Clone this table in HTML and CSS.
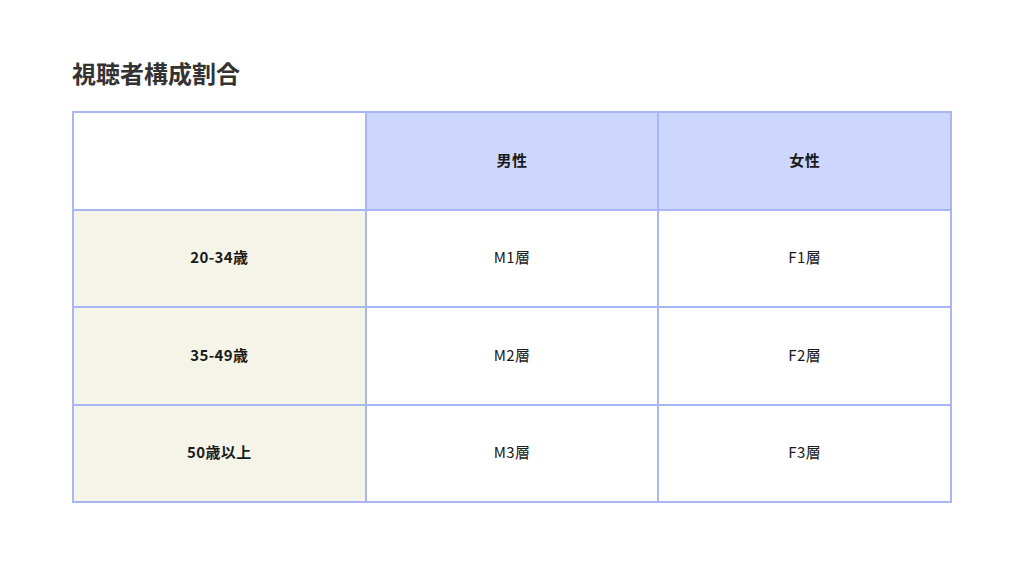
FILE: index.html
```html
<!DOCTYPE html>
<html lang="ja">
<head>
<meta charset="utf-8">
<link rel="stylesheet" href="styles.css">
</head>
<body>
<main class="page">
  <h1 class="title">視聴者構成割合</h1>
  <div class="grid">
    <div class="cell blank"></div>
    <div class="cell head">男性</div>
    <div class="cell head">女性</div>
    <div class="cell rowhead">20-34歳</div>
    <div class="cell">M1層</div>
    <div class="cell">F1層</div>
    <div class="cell rowhead">35-49歳</div>
    <div class="cell">M2層</div>
    <div class="cell">F2層</div>
    <div class="cell rowhead">50歳以上</div>
    <div class="cell">M3層</div>
    <div class="cell">F3層</div>
  </div>
</main>
</body>
</html>
```

FILE: styles.css
```css
html, body {
  margin: 0;
  padding: 0;
  background: #ffffff;
}
body {
  width: 1024px;
  height: 576px;
  font-family: "Noto Sans CJK JP", sans-serif;
  color: #111111;
}
.page {
  padding: 57px 72px 0 72px;
}
.title {
  margin: 0 0 22px 0;
  font-size: 24px;
  line-height: 32px;
  font-weight: 700;
  color: #333333;
}
.grid {
  width: 880px;
  box-sizing: border-box;
  display: grid;
  grid-template-columns: repeat(3, 1fr);
  grid-template-rows: repeat(4, 95.5px);
  gap: 2px;
  padding: 2px;
  background: #a9b6f6;
}
.cell {
  background: #ffffff;
  display: flex;
  align-items: center;
  justify-content: center;
  padding-bottom: 3px;
  font-size: 15px;
  letter-spacing: 0.4px;
  color: #1a1a1a;
}
.head {
  background: #cdd6fd;
  font-weight: 700;
}
.rowhead {
  background: #f4f4e9;
  font-weight: 700;
}
```
